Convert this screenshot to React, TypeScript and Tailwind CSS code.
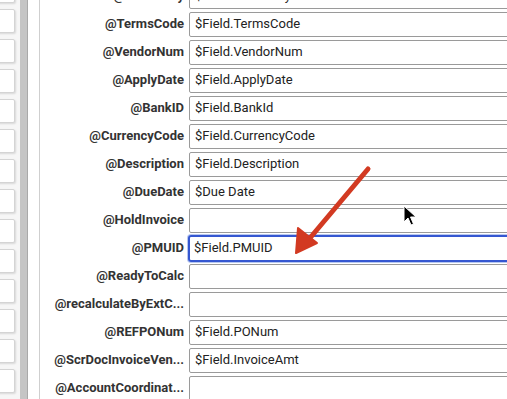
import React from 'react';

const rows: { label: string; value: string; focused?: boolean }[] = [
  { label: '@TermsKey', value: '$Field.TermsKey' },
  { label: '@TermsCode', value: '$Field.TermsCode' },
  { label: '@VendorNum', value: '$Field.VendorNum' },
  { label: '@ApplyDate', value: '$Field.ApplyDate' },
  { label: '@BankID', value: '$Field.BankId' },
  { label: '@CurrencyCode', value: '$Field.CurrencyCode' },
  { label: '@Description', value: '$Field.Description' },
  { label: '@DueDate', value: '$Due Date' },
  { label: '@HoldInvoice', value: '' },
  { label: '@PMUID', value: '$Field.PMUID', focused: true },
  { label: '@ReadyToCalc', value: '' },
  { label: '@recalculateByExtC...', value: '' },
  { label: '@REFPONum', value: '$Field.PONum' },
  { label: '@ScrDocInvoiceVen...', value: '$Field.InvoiceAmt' },
  { label: '@AccountCoordinat...', value: '' },
];

export default function App() {
  const sideBoxes = Array.from({ length: 14 });

  return (
    <div
      className="relative flex h-[399px] w-[507px] overflow-hidden bg-white"
      style={{ fontFamily: 'Roboto, "Liberation Sans", sans-serif' }}
    >
      {/* left list of stubs */}
      <div className="flex w-[20px] shrink-0 flex-col gap-[6px] bg-[#f6f6f6] -mt-[21px]">
        {sideBoxes.map((_, i) => (
          <div
            key={i}
            className="-ml-[4px] h-[24px] w-[19px] shrink-0 rounded-[2px] border border-[#d4d4d4] bg-white shadow-[1px_1px_2px_rgba(0,0,0,0.12)]"
          />
        ))}
      </div>

      {/* splitter */}
      <div className="w-[8px] shrink-0 border-r border-[#a9a9a9] bg-[#c5c5c5]" />

      <div className="w-[12px] shrink-0 border-r border-[#cfcfcf] bg-white" />

      {/* parameter form */}
      <div className="flex flex-1 flex-col gap-[4px] -mt-[16px]">
        {rows.map((r) => (
          <div key={r.label} className="flex h-[24px] shrink-0 items-center">
            <div className="w-[149px] shrink-0 truncate pr-[5px] text-right text-[13px] font-bold text-[#333]">
              {r.label}
            </div>
            <div
              className={
                r.focused
                  ? 'flex h-[27px] w-[330px] -ml-[1px] shrink-0 items-center rounded-[3px] border-2 border-[#3557d1] pl-[4px] text-[13px] text-[#222] shadow-[0_0_0_1px_#b8c8f0]'
                  : 'flex h-[25px] w-[330px] shrink-0 items-center rounded-[2px] border border-[#9a9a9a] pl-[5px] text-[13px] text-[#222]'
              }
            >
              {r.value}
            </div>
          </div>
        ))}
      </div>

      {/* annotation arrow */}
      <svg className="pointer-events-none absolute left-0 top-0" width="507" height="399">
        <line x1="368" y1="169" x2="310" y2="238" stroke="#d23a22" strokeWidth="5" strokeLinecap="round" />
        <polygon points="296,253 298,228 317,243" fill="#d23a22" stroke="#d23a22" strokeWidth="2" strokeLinejoin="round" />
      </svg>

      {/* mouse cursor */}
      <svg className="pointer-events-none absolute left-[403px] top-[205px]" width="14" height="22" viewBox="0 0 14 22">
        <path d="M1 1 L1 17 L5 13 L8 20 L10.5 19 L7.5 12 L13 12 Z" fill="#000" stroke="#fff" strokeWidth="1" />
      </svg>
    </div>
  );
}
